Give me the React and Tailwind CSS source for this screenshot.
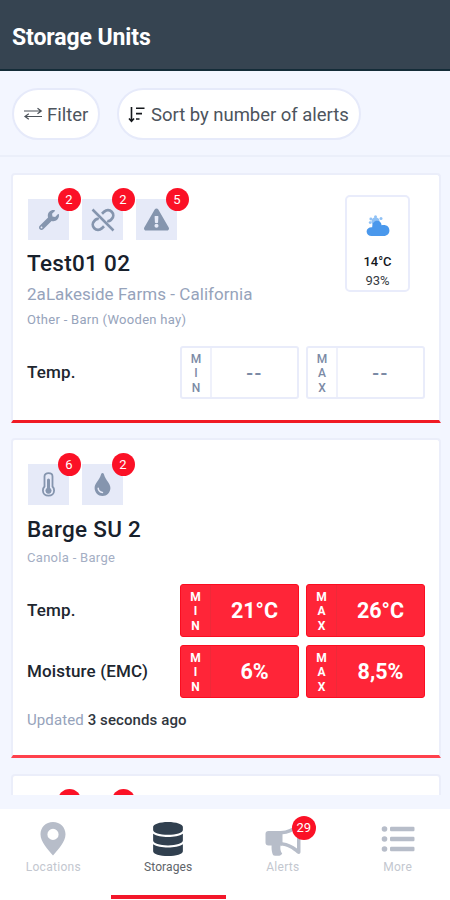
import { FaWrench, FaExclamationTriangle, FaTint, FaDatabase } from "react-icons/fa";

function SwapIcon() {
  return (
    <svg className="shrink-0" width="20" height="14" viewBox="0 0 20 14" fill="none" stroke="#4b5158" strokeWidth="1.2">
      <path d="M1 4H18M14.5 1.2L18.3 4L14.5 6.8M19 9.5H2M5.8 6.8L2 9.5L5.8 12.3" />
    </svg>
  );
}

function SortIcon() {
  return (
    <svg className="shrink-0" width="17" height="17" viewBox="0 0 17 17" fill="none" stroke="#15181c" strokeWidth="1.6">
      <path d="M3.5 1V15M1 12.5L3.5 15.2L6 12.5" />
      <path d="M8 2.2H16.5M8 7.6H14M8 13H11.5" />
    </svg>
  );
}

function UnlinkIcon() {
  return (
    <svg width="24" height="24" viewBox="0 0 24 24" fill="none" stroke="#8595ae" strokeWidth="2.8">
      <path strokeWidth="2.5" d="M1.5 1.5L22.5 22.5" />
      <path d="M11 5.8L13.3 3.6C15.5 1.7 18.7 1.8 20.7 3.8C22.7 5.8 22.7 9 20.7 11L19.3 12.4C18.4 13.2 17.4 13.4 16.2 13" />
      <path d="M13 18.2L10.7 20.4C8.5 22.3 5.3 22.2 3.3 20.2C1.3 18.2 1.3 15 3.3 13L4.7 11.6C5.6 10.8 6.6 10.6 7.8 11" />
    </svg>
  );
}

function ThermometerIcon() {
  return (
    <svg width="13" height="25" viewBox="0 0 13 25" fill="none" stroke="#8595ae">
      <path strokeWidth="1.8" d="M2.5 14.5V4.5C2.5 2.3 4.2 1.2 6.5 1.2S10.5 2.3 10.5 4.5V14.5C11.6 15.6 12.1 17 12.1 18.5C12.1 21.6 9.7 23.7 6.5 23.7S0.9 21.6 0.9 18.5C0.9 17 1.4 15.6 2.5 14.5Z" />
      <path strokeWidth="3" strokeLinecap="round" d="M6.5 8V17" />
      <circle cx="6.5" cy="18.7" r="2.6" fill="#8595ae" />
    </svg>
  );
}

function WeatherIcon() {
  return (
    <svg width="24" height="22" viewBox="0 0 24 22">
      <g fill="#8fc1f5">
        <circle cx="9.5" cy="6.5" r="4" />
        <circle cx="9.5" cy="1.7" r="1.5" />
        <circle cx="15" cy="3.6" r="1.5" />
        <circle cx="4.8" cy="4" r="1.4" />
        <circle cx="4.2" cy="7.6" r="1.4" />
      </g>
      <path fill="#4a98ec" d="M6.2 12.3C6.2 8 8.2 5.8 11 5.8C13.8 5.8 15.2 7.5 15.6 10.2C20.5 9.4 23.4 11.6 23.4 15.4C23.4 18.6 21 20.9 17.8 20.9H5.6C2.6 20.9 0.6 19 0.6 16.4C0.6 13.8 3 12.1 6.2 12.3Z" />
    </svg>
  );
}

function PinIcon() {
  return (
    <svg width="26" height="34" viewBox="0 0 26 34" fill="#b7bdc9">
      <path fillRule="evenodd" d="M13 0C20.2 0 25.5 5.2 25.5 12.3C25.5 20 18 27.5 13 33.5C8 27.5 0.5 20 0.5 12.3C0.5 5.2 5.8 0 13 0ZM13 6.8A5.6 5.6 0 1 0 13 18A5.6 5.6 0 1 0 13 6.8Z" />
    </svg>
  );
}

function BullhornIcon() {
  return (
    <svg width="36" height="34" viewBox="0 0 36 34" fill="#b7bdc9">
      <path d="M3.5 9H17V23.5H15.5C15 27 15.5 29.5 17.2 31.5C16.5 33.2 15 33.8 13 33.8H10C8.5 33.8 7.8 33 7.5 31.8C6.7 29 6.4 26.5 6.6 23.5H3.5C1.6 23.5 0.5 22.4 0.5 20.5V12C0.5 10.1 1.6 9 3.5 9Z" />
      <path fillRule="evenodd" d="M15.5 9C22 9 27.5 6 32 2C33.5 0.8 35.5 1.4 35.5 3.5V30C35.5 32 33.7 32.6 32 31.2C27.5 27.4 22 23.5 15.5 23.5ZM17.5 12.2V20.2C23 20.8 27.8 23.4 32 26.5V6.7C27.8 9.8 23 11.8 17.5 12.2Z" />
    </svg>
  );
}

function MoreIcon() {
  return (
    <svg width="34" height="28" viewBox="0 0 34 28" fill="#b7bdc9">
      <circle cx="3.5" cy="4" r="2.8" />
      <circle cx="3.5" cy="14" r="2.8" />
      <circle cx="3.5" cy="24" r="2.8" />
      <rect x="9" y="1.8" width="24.5" height="4.4" rx="1.2" />
      <rect x="9" y="11.8" width="24.5" height="4.4" rx="1.2" />
      <rect x="9" y="21.8" width="24.5" height="4.4" rx="1.2" />
    </svg>
  );
}

function AlertTile({ count, children }) {
  return (
    <div className="relative flex h-[41px] w-[41px] items-center justify-center bg-[#e6eaf8] text-[#8595ae]">
      {children}
      <span className="absolute -top-[11px] left-[29.5px] flex h-[23px] w-[23px] items-center justify-center rounded-full bg-[#fb1126] text-[13px] leading-none text-white">
        {count}
      </span>
    </div>
  );
}

function Reading({ label, value, alert }) {
  return (
    <div
      className={
        alert
          ? "flex h-[53px] w-[119px] rounded-[3px] border border-[#fb0d20] bg-[#ff2538] text-white"
          : "flex h-[53px] w-[119px] rounded-[3px] border-2 border-[#e9ecfa] bg-white text-[#7b8aa5]"
      }
    >
      <div
        className={
          alert
            ? "flex w-[30px] flex-col items-center justify-center border-r border-[#ee2a39] pt-[2px] text-[12px] leading-[14.5px] font-bold"
            : "flex w-[30px] flex-col items-center justify-center border-r-2 border-[#eff1fb] pt-[2px] text-[12px] leading-[14.5px] font-medium"
        }
      >
        {label.split("").map((c) => (
          <span key={c}>{c}</span>
        ))}
      </div>
      <div
        className={
          alert
            ? "flex flex-1 items-center justify-center pt-[2px] text-[21.5px] font-bold"
            : "flex flex-1 items-center justify-center text-[20px] font-medium tracking-[1.5px]"
        }
      >
        {value}
      </div>
    </div>
  );
}

function ReadingRow({ name, min, max, alert }) {
  return (
    <div className="flex items-center justify-between">
      <span className="text-[17px] font-medium tracking-[0.15px] whitespace-nowrap text-[#20262f]">{name}</span>
      <div className="flex gap-[7px]">
        <Reading label="MIN" value={min} alert={alert} />
        <Reading label="MAX" value={max} alert={alert} />
      </div>
    </div>
  );
}

function Tab({ label, active, badge, children }) {
  return (
    <div className="relative flex flex-1 flex-col items-center pt-[12px]">
      <div className="relative flex h-[36px] items-center justify-center">
        {children}
        {badge && (
          <span className="absolute -top-[5px] left-[27px] flex h-[24px] w-[24px] items-center justify-center rounded-full bg-[#fb1126] text-[13px] text-white">
            {badge}
          </span>
        )}
      </div>
      <span className={active ? "mt-[2px] text-[12px] leading-[16px] tracking-[0.1px] text-[#5e6469]" : "mt-[2px] text-[12px] leading-[16px] tracking-[0.3px] text-[#c3c7cf]"}>
        {label}
      </span>
      {active && <div className="absolute bottom-[1px] h-[4px] w-full bg-[#f3172a]" />}
    </div>
  );
}

export default function App() {
  return (
    <div className="flex h-[900px] w-[450px] flex-col overflow-hidden bg-[#f3f6ff] font-[Roboto,sans-serif]">
      <header className="flex h-[71px] shrink-0 items-center border-b-2 border-[#142c38] bg-[#364451] pt-[7px] pl-[12px]">
        <h1 className="text-[23px] font-bold tracking-[-0.1px] text-white">Storage Units</h1>
      </header>

      <div className="flex h-[86px] shrink-0 gap-[17px] border-b-2 border-[#ebeffa] pt-[17px] pl-[12px]">
        <button className="flex h-[52px] w-[88px] items-center rounded-full border-2 border-[#e6eafa] bg-white pl-[9px] text-[18.5px] text-[#4d545d]">
          <SwapIcon />
          <span className="ml-[4px] pt-[3px]">Filter</span>
        </button>
        <button className="flex h-[52px] w-[244px] items-center rounded-full border-2 border-[#e6eafa] bg-white pl-[9px] text-[18.5px] whitespace-nowrap text-[#4d545d]">
          <SortIcon />
          <span className="ml-[6px] pt-[3px] tracking-[-0.03px]">Sort by number of alerts</span>
        </button>
      </div>

      <main className="flex h-[638px] shrink-0 flex-col gap-[15px] overflow-hidden px-[11px] pt-[16px]">
        <section className="h-[250px] w-[430px] shrink-0 rounded-t-[4px] border-2 border-b-[3px] border-[#ebeefa] border-b-[#f01a24] bg-white px-[14px]">
          <div className="flex h-[149px] justify-between">
            <div className="pt-[24px]">
              <div className="flex gap-[13px] pl-[1px]">
                <AlertTile count="2"><FaWrench size={20} /></AlertTile>
                <AlertTile count="2"><UnlinkIcon /></AlertTile>
                <AlertTile count="5"><FaExclamationTriangle size={25} /></AlertTile>
              </div>
              <h2 className="mt-[9px] text-[22.5px] leading-[28px] font-medium tracking-[0.3px] text-[#18212c]">Test01 02</h2>
              <p className="mt-[6px] text-[17px] leading-[22px] tracking-[0.05px] text-[#96a3bb]">2aLakeside Farms - California</p>
              <p className="mt-[6px] text-[13px] leading-[18px] tracking-[0.3px] text-[#96a3bb]">Other - Barn (Wooden hay)</p>
            </div>
            <div className="mt-[20px] mr-[15px] flex h-[97px] w-[65px] flex-col items-center rounded-[5px] border-2 border-[#e9ecfb] pt-[18px] text-[13px] leading-[18px] text-[#353b42]">
              <WeatherIcon />
              <span className="mt-[16px] font-medium text-[#12171c]">14°C</span>
              <span className="pt-px">93%</span>
            </div>
          </div>
          <div className="mt-[22px]">
            <ReadingRow name="Temp." min="--" max="--" />
          </div>
        </section>

        <section className="h-[320px] w-[430px] shrink-0 rounded-t-[4px] border-2 border-b-[3px] border-[#ebeefa] border-b-[#ff414c] bg-white px-[14px] pt-[24px]">
          <div className="flex gap-[13px] pl-[1px]">
            <AlertTile count="6"><ThermometerIcon /></AlertTile>
            <AlertTile count="2"><FaTint size={23} /></AlertTile>
          </div>
          <h2 className="mt-[10px] text-[22.5px] leading-[28px] font-medium tracking-[0.3px] text-[#18212c]">Barge SU 2</h2>
          <p className="mt-[6px] text-[13px] leading-[18px] tracking-[0.3px] text-[#a4aec4]">Canola - Barge</p>
          <div className="mt-[17px] flex flex-col gap-[8px]">
            <ReadingRow name="Temp." min="21°C" max="26°C" alert />
            <ReadingRow name="Moisture (EMC)" min="6%" max="8,5%" alert />
          </div>
          <p className="mt-[12px] text-[15px] leading-[20px] tracking-[0.1px] text-[#96a3bb]">
            Updated <span className="font-medium text-[#30363e]">3 seconds ago</span>
          </p>
        </section>

        <section className="mt-px h-[200px] w-[430px] shrink-0 rounded-t-[4px] border-2 border-[#ebeefa] bg-white px-[14px] pt-[24px]">
          <div className="flex gap-[13px] pl-[1px]">
            <AlertTile />
            <AlertTile />
          </div>
        </section>
      </main>

      <nav className="mt-[14px] -mr-[5px] -ml-[4px] flex h-[91px] w-[459px] shrink-0 bg-white">
        <Tab label="Locations"><PinIcon /></Tab>
        <Tab label="Storages" active><FaDatabase size={34} className="text-[#31404f]" /></Tab>
        <Tab label="Alerts" badge="29"><BullhornIcon /></Tab>
        <Tab label="More"><MoreIcon /></Tab>
      </nav>
    </div>
  );
}
